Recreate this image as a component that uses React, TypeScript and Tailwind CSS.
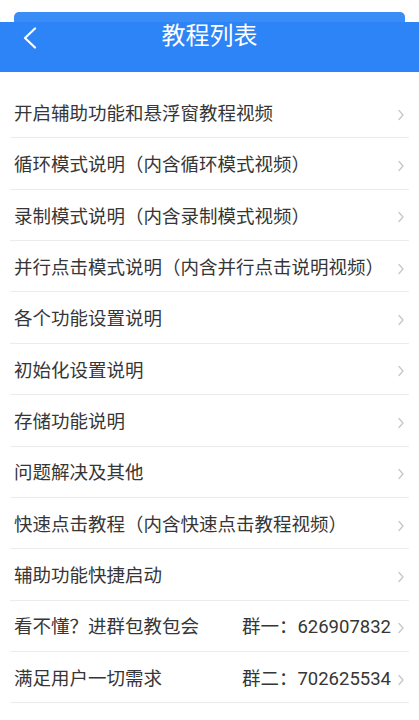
import React from "react";

const rows: { left: string; right?: string }[] = [
  { left: "开启辅助功能和悬浮窗教程视频" },
  { left: "循环模式说明（内含循环模式视频）" },
  { left: "录制模式说明（内含录制模式视频）" },
  { left: "并行点击模式说明（内含并行点击说明视频）" },
  { left: "各个功能设置说明" },
  { left: "初始化设置说明" },
  { left: "存储功能说明" },
  { left: "问题解决及其他" },
  { left: "快速点击教程（内含快速点击教程视频）" },
  { left: "辅助功能快捷启动" },
  { left: "看不懂？进群包教包会", right: "群一：626907832" },
  { left: "满足用户一切需求", right: "群二：702625534" },
  { left: "定制脚本服务说明（内含定制脚本说明视频）" },
];

function Chevron() {
  return (
    <svg width="6" height="12" viewBox="0 0 6 12" className="shrink-0">
      <polyline points="1,1.5 5,6 1,10.5" fill="none" stroke="#c9c9c9" strokeWidth="1.4" strokeLinecap="round" strokeLinejoin="round" />
    </svg>
  );
}

export default function App() {
  return (
    <div
      className="w-[419px] h-[720px] overflow-hidden bg-white"
      style={{ fontFamily: 'Roboto, "Noto Sans CJK SC", sans-serif' }}
    >
      <div className="pt-[12px]">
        <div className="mx-[14px] h-[10px] rounded-t-[5px] bg-[#3a8cf6]" />
        <div className="h-[50px] bg-[#2c84f6] flex items-start relative">
          <div className="absolute left-[22px] top-[5px]">
            <svg width="16" height="22" viewBox="0 0 16 22">
              <polyline points="13,1.5 3,11 13,20.5" fill="none" stroke="#ffffff" strokeWidth="2.2" strokeLinecap="round" strokeLinejoin="round" />
            </svg>
          </div>
          <div className="w-full text-center text-white text-[24px] leading-[28px]">教程列表</div>
        </div>
      </div>
      <div className="pt-[15px] mx-[10px]">
        {rows.map((r, i) => (
          <div
            key={i}
            className="h-[51.36px] border-b border-[#ececec] flex items-center pt-[5px] pl-[4px] pr-[5px] text-[18.5px] text-[#363636]"
          >
            <span className="flex-1 whitespace-nowrap">{r.left}</span>
            {r.right && <span className="whitespace-nowrap mr-[7px]">{r.right}</span>}
            <Chevron />
          </div>
        ))}
      </div>
    </div>
  );
}
